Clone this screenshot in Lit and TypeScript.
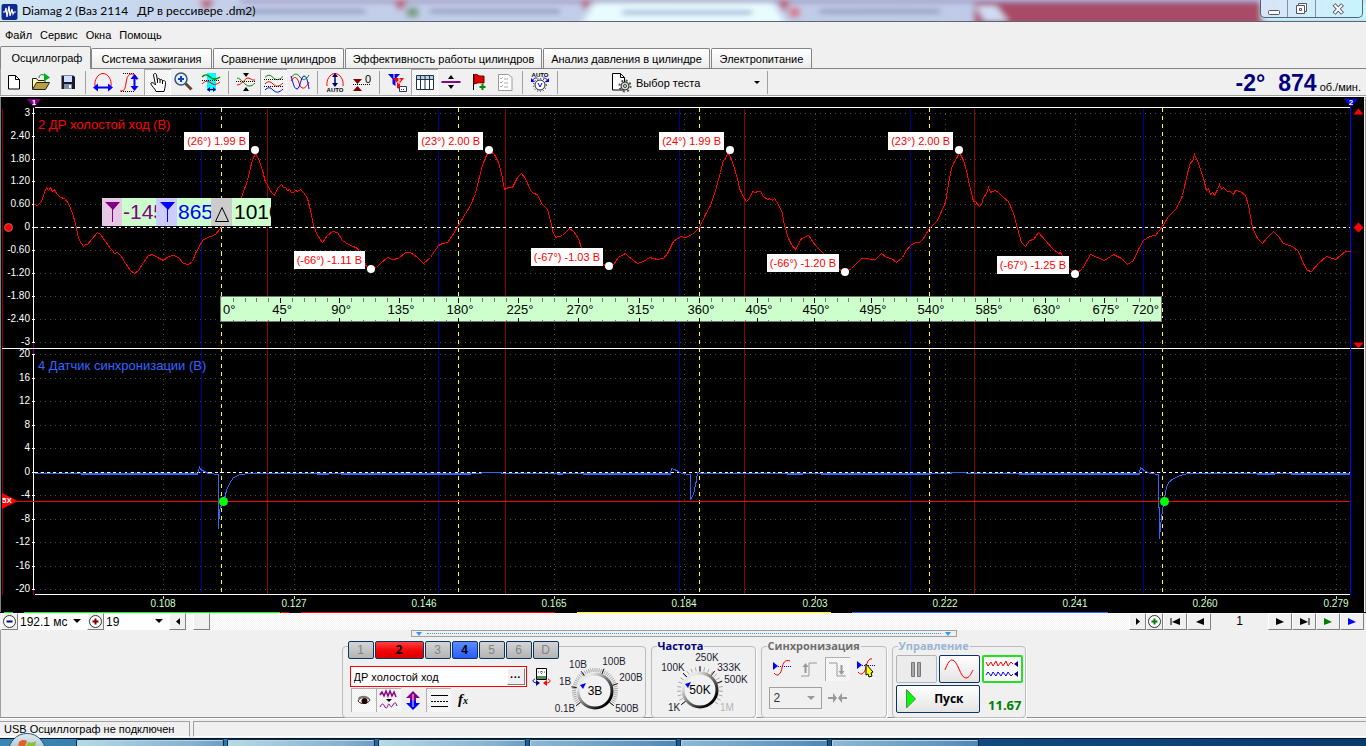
import { LitElement, html, svg, css, nothing, TemplateResult } from 'lit';
import { customElement } from 'lit/decorators.js';
import { classMap } from 'lit/directives/class-map.js';
import { styleMap } from 'lit/directives/style-map.js';

/* Plot space: the drawing origin and size of the oscilloscope canvas. */
const PX = 1, PY = 97, PW = 1363, PH = 515;
const at = (x: number, y: number) => ({
  left: `${((x - PX) / PW) * 100}%`,
  top: `${((y - PY) / PH) * 100}%`,
});
const rightAt = (x: number, y: number) => ({
  right: `${((PX + PW - x) / PW) * 100}%`,
  bottom: `${((PY + PH - y) / PH) * 100}%`,
});

const UPPER = [[113, '3'], [136, '2.40'], [159, '1.80'], [181, '1.20'], [204, '0.60'], [227, '0'], [250, '-0.60'], [273, '-1.20'], [296, '-1.80'], [319, '-2.40'], [342, '-3']] as [number, string][];
const LOWER = [[354, '20'], [378, '16'], [401, '12'], [425, '8'], [448, '4'], [472, '0'], [495, '-4'], [519, '-8'], [542, '-12'], [566, '-16'], [589, '-20']] as [number, string][];
const TIMES = [[163, '0.108'], [294, '0.127'], [424, '0.146'], [554, '0.165'], [684, '0.184'], [815, '0.203'], [945, '0.222'], [1075, '0.241'], [1205, '0.260'], [1336, '0.279']] as [number, string][];
const DEGREES = [[221, 0], [280, 45], [339, 90], [399, 135], [458, 180], [518, 225], [578, 270], [639, 315], [699, 360], [757, 405], [814, 450], [871, 495], [929, 540], [987, 585], [1045, 630], [1104, 675], [1162, 720]];
const PEAKS = [[255, 150, '(26°) 1.99 В'], [489, 150, '(23°) 2.00 В'], [730, 150, '(24°) 1.99 В'], [959, 150, '(23°) 2.00 В'], [371, 269, '(-66°) -1.11 В'], [609, 266, '(-67°) -1.03 В'], [845, 272, '(-66°) -1.20 В'], [1075, 274, '(-67°) -1.25 В']] as [number, number, string][];

const PRESSURE = '34,204 37,205 41,201 44,192 46,187 48,190 50,187 52,191 54,189 56,193 60,197 64,198 68,203 72,213 75,223 78,238 81,243 83,246 85,244 87,244 92,238 97,232 100,234 105,241 110,248 112,250 114,253 117,252 121,256 125,263 130,270 134,273 138,270 143,262 148,255 152,254 157,257 163,260 168,256 173,255 178,257 183,263 188,264 192,261 195,253 200,244 203,239 210,236 215,234 220,228 230,212 241,197 247,180 251,163 253,157 255,153 258,158 262,170 265,182 267,184 269,189 272,193 274,195 277,188 281,184 283,187 285,187 287,190 289,189 291,192 293,192 295,190 297,191 300,189 303,192 307,198 310,210 313,225 317,235 322,242 327,235 332,231 337,232 342,240 348,244 353,246 357,248 361,256 366,266 371,269 376,267 380,263 387,257 392,259 398,258 405,252 410,252 417,257 423,263 430,257 438,245 442,243 447,242 452,235 458,225 465,213 470,205 475,193 478,180 482,165 485,157 487,153 489,150 494,154 498,162 501,173 504,189 508,187 512,187 517,177 521,173 525,178 530,190 533,193 537,194 541,203 547,209 550,220 552,230 555,237 562,235 569,228 573,231 578,238 581,248 588,258 603,264 609,267 613,264 618,257 625,253 628,256 637,263 643,261 649,257 657,259 663,258 667,253 673,241 680,236 685,237 692,234 699,227 705,214 710,205 715,190 720,172 723,160 725,158 727,153 729,154 732,162 737,178 739,188 741,192 743,197 746,201 749,198 752,191 755,192 757,191 760,191 763,196 767,199 769,198 772,200 774,198 778,204 782,213 784,225 788,238 791,244 795,249 801,238 808,235 815,245 823,253 830,262 839,269 845,272 851,268 857,262 861,258 875,259 881,253 886,257 891,258 896,262 902,257 906,250 910,245 915,242 919,242 923,238 929,228 937,220 945,202 948,183 951,168 953,163 956,158 959,152 963,160 966,170 968,180 973,201 975,201 979,206 981,204 983,197 986,193 988,187 990,192 992,191 995,190 998,192 1003,197 1008,201 1013,213 1017,228 1021,242 1025,246 1029,240 1033,239 1038,232 1045,240 1052,248 1058,253 1060,252 1068,267 1075,274 1082,268 1090,254 1097,257 1104,260 1113,254 1121,258 1127,264 1133,260 1138,249 1143,240 1149,236 1155,235 1162,226 1168,216 1176,208 1182,195 1187,173 1190,162 1192,161 1194,154 1198,163 1203,178 1206,190 1208,188 1210,194 1212,192 1214,195 1217,189 1219,184 1221,189 1223,187 1227,191 1230,191 1233,194 1235,190 1240,191 1245,195 1248,205 1252,227 1257,238 1262,243 1267,237 1273,231 1278,236 1283,243 1292,246 1298,251 1303,263 1307,270 1311,271 1318,263 1326,256 1335,259 1345,251 1350,251';
const SYNC = '34,473 197,473 198,472 199,466 200,469 204,471 208,473 218,474 218,528 219,510 222,502 224,498 226,490 229,483 233,477 240,474 250,473 480,473 482,472 500,472 502,473 670,473 671,468 674,469 678,471 681,473 690,474 690,499 693,494 695,484 696,480 697,472 700,473 950,473 952,472 965,472 967,473 1139,473 1140,467 1145,471 1150,473 1158,474 1159,538 1160,525 1162,510 1164,497 1166,487 1168,482 1173,478 1180,475 1187,473 1350,473';

/* Toolbar pictures, each on a 27×26 field. */
const I: Record<string, TemplateResult> = {
  page: svg`<path d="M7.5 6.5h7l4 4v9.5h-11z" fill="#fff" stroke="#000"/><path d="M14.500 6.500v4h4" fill="none" stroke="#000"/>`,
  open: svg`<path d="M4.500 20V9.500h4l1.500 2h7V14" fill="#ffffb0" stroke="#222"/><path d="M4.500 20.500l4-7h13l-4 7z" fill="#b8a040" stroke="#222"/><path d="M11 9c0-3 2-4 5-3" fill="none" stroke="#083"/><path d="M16 4l6 4.500-6 4z" fill="#00b020"/>`,
  save: svg`<path d="M6.500 6.500h12l1.500 1.500v12h-13.500z" fill="#1a1a2a"/><path d="M9 7h8v6h-8z" fill="#cfe0ff"/><path d="M9 15h8v5h-8z" fill="#8090a8"/><path d="M14 16h2v3h-2z" fill="#fff"/>`,
  arc: svg`<path d="M5 17C4 11 8 4.500 13 4.500S22 11 21 17" fill="none" stroke="#f00"/><path d="M6 18.500h14" stroke="#00f" stroke-width="2"/><path d="M3 18.500l5-4v8zM23 18.500l-5-4v8z" fill="#00f"/>`,
  rise: svg`<path d="M6 4.500h12M4 22.500h14" stroke="#000" stroke-dasharray="1 1"/><path d="M3 22c5 0 5-2 6-8s2-9 6-9 4 3 5 6" fill="none" stroke="#f00"/><path d="M17.500 8v11" stroke="#00f" stroke-width="2"/><path d="M17.500 5l-4 5h8zM17.500 22l-4-5h8z" fill="#00f"/>`,
  hand: svg`<path d="M9.500 6c0-2 3-2 3 0l1 6 0-2c1-1 2.500-.5 2.500 1 1-1 2.500-.5 2.500 1 1.500-1 3 0 3 1.500 0 3-.5 5-1.500 9h-8c-1-3-4-5-5-7.500-.5-1.500 1.500-2 3-.5l1.500 1.500z" fill="#fff" stroke="#000"/><path d="M13.500 12v2M16 11v3M18.500 12v3" stroke="#000"/>`,
  loupe: svg`<circle cx="10" cy="10" r="6" fill="#dff0ff" stroke="#405070" stroke-width="1.500"/><path d="M7 10h6M10 7v6" stroke="#1040c0" stroke-width="2"/><path d="M14.500 14.500l6 6" stroke="#604830" stroke-width="3"/>`,
  slice: svg`<path d="M9 4h9v18h-9z" fill="#00ffff"/><path d="M4 8c3-3 5-3 8 0s6 3 10 0" fill="none" stroke="#080" stroke-width="1.500"/><path d="M4 11.500h18" stroke="#000" stroke-dasharray="1 1"/><path d="M4 15c4-4 6-3 9-1s5 2 9-1" fill="none" stroke="#f00"/><path d="M11 20.500h5" stroke="#008"/><path d="M9 20.500l3-2.500v5zM18 20.500l-3-2.500v5z" fill="#008"/>`,
  dna: svg`<path d="M4 9c4 0 8 8 12 8 3 0 4-1 6-3" fill="none" stroke="#080"/><path d="M4 16c5 0 8-7 11-7s4 3 7 2" fill="none" stroke="#f00"/><path d="M3 12.500h20" stroke="#000" stroke-dasharray="1 1"/><path d="M10 4h6l-3 4zM10 22h6l-3-4z" fill="#000"/>`,
  waves: svg`<path d="M5 8.500c3-3 5-3 8 0s6 3 10-1" fill="none" stroke="#080"/><path d="M5 15c3-3 5-3 8 0s6 3 10-1" fill="none" stroke="#f00"/><path d="M5 21c3-3 5-3 8 0s6 3 10-1" fill="none" stroke="#00f"/><path d="M4 10.500h19M4 17.500h19" stroke="#000" stroke-dasharray="1 1"/>`,
  mixed: svg`<path d="M4 9c3-5 6-5 9-1s6 3 9-2" fill="none" stroke="#080"/><path d="M4 12c3-5 6-5 8 2s6 7 10-1" fill="none" stroke="#f00"/><path d="M4 7c2 6 3 13 6 13s4-13 7-13 4 7 5 13" fill="none" stroke="#00f"/>`,
  auto: svg`<path d="M5 17C4 11 8 4.500 13 4.500S22 11 21 17" fill="none" stroke="#f00"/><path d="M13 7v8" stroke="#006" stroke-width="1.500"/><path d="M13 4l-3 4h6zM13 18l-3-4h6z" fill="#006"/><text x="13" y="23">AUTO</text>`,
  zero: svg`<path d="M4 10h9l-4.500 5zM4 22h9l-4.500-5z" fill="#800000"/><path d="M4 15.500h18" stroke="#000" stroke-dasharray="1 1"/><text x="19" y="14">0</text>`,
  filter: svg`<path d="M4 5h12l-4.500 5v7l-3-2v-5z" fill="#00f"/><path d="M9 9h11l-4 5v6l-3-1v-5z" fill="#f00"/><path d="M10 5v4M14 10h2v2h-2v2h2" fill="none" stroke="#fff"/><path d="M15.500 17.500h7v5h-7z" fill="#fff" stroke="#336"/><path d="M17 20.500h4" stroke="#336" stroke-dasharray="1 1"/>`,
  table: svg`<path d="M5.500 6.500h17v14h-17z" fill="#fff" stroke="#234"/><path d="M6 7h16v3h-16z" fill="#b8d0e8"/><path d="M5 10.500h18M9.500 7v14M14 7v14M18.500 7v14" stroke="#234"/>`,
  split: svg`<path d="M3.500 13h19" stroke="#808" stroke-width="2"/><path d="M13 6l3 4h-6zM13 20l3-4h-6z" fill="#000"/>`,
  flag: svg`<path d="M8.500 5v16" stroke="#000"/><path d="M9 6c3-2 4 1 6 1s3 0 4 0v7c-3 0-5-1-10 1z" fill="#e00000" stroke="#600"/><path d="M17.500 15v6M14.500 18h6" stroke="#080" stroke-width="2"/>`,
  list: svg`<path d="M6.500 5.500h10l3.500 3v13h-13.500z" fill="#fff" stroke="#999"/><path d="M8 9l1 1 2-2M8 13l1 1 2-2M8 17l1 1 2-2M12 10h4M12 14h4M12 18h4" fill="none" stroke="#aaa"/>`,
  volt: svg`<text x="13" y="8">AUTO</text><path d="M5 12c2-3 3-3 5-3M21 12c-2-3-3-3-5-3" fill="none" stroke="#00f"/><path d="M4 9v4h4zM22 9v4h-4z" fill="#00f"/><circle cx="13" cy="16" r="5" fill="#fff" stroke="#222"/><circle cx="13" cy="16" r="6.500" fill="none" stroke="#222" stroke-dasharray="1 2"/><path d="M11 14l2 4 2-4" fill="none" stroke="#00f"/>`,
};
const TOOLS: string[][] = [['page', 'open', 'save'], ['arc', 'rise', '*hand', 'loupe', 'slice'], ['dna', '*waves', 'mixed'], ['auto', 'zero'], ['filter', '*table', 'split', 'flag', 'list'], ['volt']];

@customElement('scope-plot')
export class ScopePlot extends LitElement {
  static styles = css`
    :host { display: block; position: relative; background: #000; overflow: hidden; color: #fff; font: 10px/12px "Liberation Sans", Arial, sans-serif; }
    .trace { position: absolute; inset: 0; width: 100%; height: 100%; display: block; }
    .trace * { vector-effect: non-scaling-stroke; }
    span { position: absolute; white-space: nowrap; }
    .y { width: 30px; text-align: right; margin-top: -6px; }
    .x { transform: translateX(-50%); color: #d4ffcc; }
    .deg { transform: translate(-50%, -50%); padding-left: 4px; color: #000; font-size: 13px; line-height: 16px; }
    .deg.first { transform: translateY(-50%); padding-left: 2px; }
    .deg.last { transform: translate(-100%, -50%); padding: 0 3px 0 0; }
    .peak { background: #fff; color: #f00; font-size: 11px; line-height: 18px; padding: 0 3px; margin-right: 6px; }
    .dot { width: 8px; height: 8px; margin: -4px; border-radius: 50%; background: #fff; }
    .title { font-size: 13px; line-height: 16px; color: #f00; }
    .title.sync { color: #36f; }
    .mark { width: 14px; margin-left: -7px; text-align: center; font: bold 8px/8px "Liberation Sans", Arial, sans-serif; background: #800080; clip-path: polygon(0 0, 100% 0, 50% 100%); }
    .mark.two { background: #00f; }
    .trig { width: 16px; height: 16px; background: #f00; clip-path: polygon(0 0, 100% 50%, 0 100%); font: bold 8px/16px "Liberation Sans", Arial, sans-serif; }
    .knot { width: 9px; height: 9px; margin: -4px; border-radius: 50%; background: #0f0; }
    .readout { position: absolute; display: flex; height: 28px; font-size: 21px; line-height: 28px; background: #cfc; }
    .readout svg { flex: none; display: block; }
    .readout b { font-weight: 400; overflow: hidden; width: 34px; padding-left: 1px; box-sizing: border-box; }
    .readout b.p { color: #800080; } .readout b.b { color: #00f; } .readout b.k { color: #000; width: 39px; padding-left: 2px; }
  `;
  private ticks() {
    const out: TemplateResult[] = [];
    DEGREES.forEach(([x], i) => {
      if (i) out.push(svg`<path d="M${x} 297v5M${x} 321v-4" stroke="#000"/>`);
      const next = DEGREES[i + 1];
      if (next) for (let k = 1; k < 5; k++) {
        const m = Math.round(x + ((next[0] - x) * k) / 5);
        out.push(svg`<path d="M${m} 297v4M${m} 321v-2" stroke="#777"/>`);
      }
    });
    return out;
  }
  render() {
    return html`
      <svg class="trace" viewBox="0.500 96.500 1363 515" preserveAspectRatio="none" fill="none" stroke-width="1">
        <g shape-rendering="crispEdges">
          <g stroke="#4c4c4c" stroke-dasharray="1 4">
            ${[...UPPER, ...LOWER].map(([y]) => svg`<path d="M39 ${y}H1350"/>`)}
            ${TIMES.map(([x]) => svg`<path d="M${x} 113V594"/>`)}
          </g>
          <g stroke="#8b0000">${[2, 267, 505, 744, 974].map((x) => svg`<path d="M${x} 108V594"/>`)}</g>
          <g stroke="#000090">${[201, 438, 679, 910, 1143].map((x) => svg`<path d="M${x} 108V594"/>`)}</g>
          <path d="M33 106V594" stroke="#800080"/>
          <path d="M34 107H1350M1 348H1364M34 594H1350M33 107V342M33 354V589" stroke="#fff"/>
          ${[...UPPER, ...LOWER].map(([y]) => svg`<path d="M31 ${y}h3" stroke="#fff"/>`)}
          ${TIMES.map(([x]) => svg`<path d="M${x} 595v3" stroke="#ccc"/>`)}
          <path d="M34 227H1350M34 472H1350" stroke="#fff" stroke-dasharray="3 3"/>
          <g stroke="#ffff00" stroke-dasharray="4 4">${[221, 458, 699, 929, 1162].map((x) => svg`<path d="M${x} 107V594"/>`)}</g>
          <path d="M80 474H197M316 474H328M340 474H470M556 474H562M582 474H670M786 474H802M820 474H930M1018 474H1139M1256 474H1274M1290 474H1350" stroke="#36f"/>
          <polyline points=${SYNC} stroke="#36f"/>
          <path d="M16 501H1350" stroke="#f00"/>
          <path d="M1350 106V594" stroke="#00f"/>
          <polyline points=${PRESSURE} stroke="#f00"/>
          <path d="M220 296H1161V321H220z" fill="#cfc" stroke="#777"/>
          ${this.ticks()}
        </g>
        <g fill="#f00"><path d="M1353 114h10l-5-6zM1353 342h10l-5 6zM1353 227l5-5 5 5-5 5z"/><circle cx="8" cy="227" r="4" stroke="#a66"/></g>
      </svg>
      ${[...UPPER, ...LOWER].map(([y, t]) => html`<span class="y" style=${styleMap(at(0, y))}>${t}</span>`)}
      ${TIMES.map(([x, t]) => html`<span class="x" style=${styleMap(at(x, 598))}>${t}</span>`)}
      ${DEGREES.map(([x, d]) => html`<span class=${classMap({ deg: true, first: d === 0, last: d === 720 })} style=${styleMap(at(x, 310))}>${d}°</span>`)}
      <span class="title" style=${styleMap(at(38, 117))}>2 ДР холостой ход (В)</span>
      <span class="title sync" style=${styleMap(at(38, 358))}>4 Датчик синхронизации (В)</span>
      ${PEAKS.map(([x, y, t]) => html`<span class="peak" style=${styleMap(rightAt(x, y))}>${t}</span><span class="dot" style=${styleMap(at(x, y))}></span>`)}
      ${[223, 1164].map((x) => html`<span class="knot" style=${styleMap(at(x, 501))}></span>`)}
      <span class="mark" style=${styleMap(at(34, 99))}>1</span>
      <span class="mark two" style=${styleMap(at(1351, 99))}>2</span>
      <span class="trig" style=${styleMap(at(2, 493))}>5X</span>
      <div class="readout" style=${styleMap(at(102, 198))}>
        <svg width="20" height="28"><path d="M0 0h20v28H0z" fill="#e6c8e6"/><path d="M3 4h15l-7 8z" fill="#800080"/><path d="M10.500 8v16" stroke="#800080"/></svg><b class="p">-145</b>
        <svg width="21" height="28"><path d="M0 0h21v28H0z" fill="#ccf"/><path d="M4 4h15l-7 8z" fill="#00f"/><path d="M11.500 8v16" stroke="#00f"/></svg><b class="b">865</b>
        <svg width="21" height="28"><path d="M0 0h21v28H0z" fill="#ccc"/><path d="M4.500 23.500h13l-6.500-14z" fill="none" stroke="#000"/></svg><b class="k">1010</b>
      </div>`;
  }
}

@customElement('range-knob')
export class RangeKnob extends LitElement {
  static properties = { kind: {}, value: {} };
  declare kind: string;
  declare value: string;
  static styles = css`
    :host { display: block; }
    svg { display: block; width: 94px; height: 64px; overflow: visible; }
    text { font: 10px "Liberation Sans", Arial, sans-serif; fill: #1c1c30; text-anchor: middle; }
    text.v { font-size: 12px; fill: #000; }
    text.off { fill: #b4b4b4; }
  `;
  render() {
    const volts = this.kind === 'volts';
    const cx = 47, cy = 37;
    const marks: [number, number, string][] = volts
      ? [[17, 58, '0.1В'], [17, 31, '1В'], [30, 14, '10В'], [66, 11, '100В'], [83, 27, '200В'], [79, 58, '500В']]
      : [[21, 58, '1K'], [20, 18, '100K'], [54, 8, '250K'], [76, 18, '333K'], [83, 30, '500K'], [74, 58, '1M']];
    const line = (deg: number, a: number, b: number, c: string, w = 1) => {
      const r = (deg * Math.PI) / 180;
      return svg`<path d="M${cx + a * Math.sin(r)} ${cy - a * Math.cos(r)}L${cx + b * Math.sin(r)} ${cy - b * Math.cos(r)}" stroke=${c} stroke-width=${w}/>`;
    };
    const dense = [];
    const n = volts ? 46 : 22;
    for (let i = 0; i <= n; i++) dense.push(line(-128 + (256 * i) / n, 19, 23, '#a8a8a8'));
    return html`<svg viewBox="0 0 94 64" fill="none" role="img" aria-label=${this.value}>
      <defs><linearGradient id="g" x1="0" y1="0" x2="1" y2="1"><stop offset=".2" stop-color="#e8e8e8"/><stop offset=".5" stop-color="#777"/><stop offset=".85" stop-color="#000"/></linearGradient></defs>
      ${dense}
      ${(volts ? [-128, -80, -35, 22, 72, 128] : [-128, -45, 0, 38, 68]).map((d) => line(d, 18, 24, '#111'))}
      <circle cx=${cx} cy=${cy} r="17" fill="#f2f2f2" stroke="url(#g)" stroke-width="3"/>
      <path d="M32 31l6-2-3 6z" fill="#00f"/>
      <text class="v" x=${cx} y=${cy + 4}>${this.value}</text>
      ${marks.map(([x, y, t]) => svg`<text class=${t === '1M' ? 'off' : ''} x=${x} y=${y}>${t}</text>`)}
    </svg>`;
  }
}

@customElement('app-root')
export class AppRoot extends LitElement {
  static styles = css`
    :host { display: flex; flex-direction: column; height: 100vh; overflow: hidden; background: #f0f0f0; color: #000; font: 11px/14px "Liberation Sans", Tahoma, Arial, sans-serif; }
    * { box-sizing: border-box; }
    button, select, input { font: inherit; color: inherit; margin: 0; padding: 0; border: 0; background: none; border-radius: 0; }
    svg { display: block; }

    .titlebar { position: relative; flex: none; display: flex; align-items: center; height: 22px; overflow: hidden; border-bottom: 1px solid #5c6672; background: #b9c6e4; }
    .glass { position: absolute; inset: 0; width: 100%; height: 100%; }
    .titlebar .logo { position: relative; margin-left: 1px; }
    h1 { position: relative; flex: 1; margin: 0 0 0 4px; font: 12px/20px Lato, "Open Sans", sans-serif; white-space: pre; }
    .caption { position: relative; align-self: flex-start; display: flex; width: 103px; height: 18px; margin-right: 3px; border: 1px solid #56627a; border-top: 0; border-radius: 0 0 5px 5px; background: linear-gradient(90deg, #d8e4f8, #c8f4fc); }
    .caption button { flex: 27; display: grid; place-items: center; border-left: 1px solid #8090a8; }
    .caption button:first-child { border: 0; }
    .caption .close { flex: 47; }

    .menu { flex: none; display: flex; gap: 8px; height: 24px; padding: 6px 5px 4px; }
    .menu a { color: #000; text-decoration: none; }

    .tabs { flex: none; display: grid; grid-template-columns: 91px 122px 132px 198px 168px 102px; align-items: end; height: 23px; border-bottom: 1px solid #848484; }
    .tabs button { height: 20px; margin-right: 1px; border: 1px solid #848484; border-bottom: 0; border-radius: 2px 2px 0 0; background: linear-gradient(#fff, #ececec); white-space: nowrap; }
    .tabs button.on { height: 23px; margin: 0 0 -1px; padding: 0 0 1px 3px; background: #f0f0f0; }

    .toolbar { flex: none; display: flex; height: 28px; border-bottom: 1px solid #fff; box-shadow: inset 0 -1px #a0a0a0, inset 1px 0 #a0a0a0; padding: 0 5px 1px 1px; }
    .toolbar .tool { width: 27px; height: 26px; }
    .toolbar .tool.on { background: repeating-conic-gradient(#fff 0 25%, #ececec 0 50%) 0 0 / 2px 2px; box-shadow: inset 1px 1px #a8a8a8, inset -1px -1px #fff; }
    .tool text { font: bold 6px "Liberation Sans", Arial, sans-serif; text-anchor: middle; }
    .tool .big text { font-size: 11px; font-weight: 400; }
    .sep { width: 8px; padding: 2px 4px 1px 3px; }
    .sep::before { content: ""; display: block; height: 100%; background: #a0a0a0; }
    .test { display: flex; align-items: center; width: 206px; margin: 2px 0 1px; padding: 0 7px 0 49px; border-right: 1px solid #a0a0a0; }
    .test span { flex: 1; margin-left: 4px; text-align: left; }
    .rpm { display: flex; align-items: baseline; margin-left: auto; white-space: nowrap; gap: 13px; color: #000080; font: bold 23px/28px "Liberation Sans", Arial, sans-serif; }
    .rpm small { margin-left: 3px; color: #000; font: 11px/14px "Liberation Sans", Arial, sans-serif; }

    .frame { flex: 1; display: flex; min-height: 200px; border-left: 1px solid #808080; border-right: 1px solid #a0a0a0; padding-right: 1px; }
    scope-plot { flex: 1; }

    .strip { flex: none; width: 100%; height: 1px; background: #000; }
    .nav { flex: none; display: flex; height: 17px; margin-left: 1px; padding-right: 2px; }
    .nav button { flex: none; width: 24px; border: 1px solid #fff; border-right-color: #808080; border-bottom-color: #808080; background: #f0f0f0; display: grid; place-items: center; }
    .nav button.sq { width: 17px; }
    .nav svg { flex: none; }
    .pick { position: relative; flex: none; display: flex; width: 69px; background: #fff; }
    .pick select { appearance: none; width: 100%; padding-left: 2px; font-size: 12px; line-height: 16px; }
    .pick svg { position: absolute; right: 6px; top: 6px; pointer-events: none; }
    .pick.wide { width: 65px; }
    input[type='range'] { appearance: none; flex: 1; min-width: 100px; height: 17px; background: repeating-conic-gradient(#fff 0 25%, #f0f0f0 0 50%) 0 0 / 2px 2px; }
    input[type='range']::-webkit-slider-thumb { appearance: none; width: 17px; height: 17px; background: #f0f0f0; border: 1px solid #fff; border-right-color: #808080; border-bottom-color: #808080; }
    output.page { width: 57px; text-align: center; font-size: 12px; line-height: 17px; }

    .deck { flex: none; height: 88px; display: flex; flex-direction: column; align-items: center; border-left: 1px solid #a0a0a0; border-bottom: 1px solid #909090; }
    .splitter { flex: none; width: 546px; height: 7px; border: 1px solid #a0a0a0; display: flex; align-items: center; justify-content: space-between; padding: 0 4px; }
    .splitter i { flex: 1; margin: 0 4px; border-top: 1px dotted #39f; }
    .groups { display: flex; gap: 5px; margin-top: 2px; }
    fieldset { position: relative; min-width: 0; margin: 0; padding: 0; height: 79px; border: 1px solid #bcbcbc; border-radius: 4px; box-shadow: 1px 1px #fff; }
    legend { margin-left: 5px; padding: 0 1px; font: bold 11px/14px "Open Sans", "Noto Sans", sans-serif; color: #000080; }
    .sync legend { color: #6d6d6d; } .run legend { color: #9ab4d4; }

    .chan { display: flex; width: 304px; height: 72px; margin-top: 7px; padding: 0; border: 1px solid #bcbcbc; border-radius: 4px; }
    .left { flex: none; width: 213px; margin-top: -6px; padding-left: 5px; }
    .nums { display: grid; grid-template-columns: 26px 49px repeat(5, 26px); gap: 1px; height: 18px; background: #f0f0f0; }
    .nums button { border: 1px solid #0b3560; border-radius: 2px; background: linear-gradient(#d4d4d4, #b4b4b4); color: #848484; font-size: 12px; line-height: 16px; }
    .nums .red { background: linear-gradient(#ff4040, #f00000 60%, #d80000); color: #000; font: bold 12px/16px "Open Sans", sans-serif; }
    .nums .blue { background: linear-gradient(#5c8cff, #2a5cff); color: #000; font-weight: bold; }
    .name { display: flex; align-items: center; gap: 5px; margin: 7px 0 1px 2px; }
    .field { display: flex; width: 177px; height: 21px; border: 1px solid #f00; background: #fff; padding: 1px; }
    .field input { flex: 1; min-width: 0; padding-left: 2px; }
    .field button { width: 18px; border: 1px solid #fff; border-right-color: #808080; border-bottom-color: #808080; background: #f0f0f0; font-weight: bold; line-height: 10px; }
    .opts { display: flex; margin-left: 3px; }
    .opts button { width: 25px; height: 24px; }
    .opts .on, .edges .on { background: repeating-conic-gradient(#fff 0 25%, #ececec 0 50%) 0 0 / 2px 2px; box-shadow: inset 1px 1px #b0b0b0; }
    .chan range-knob { margin: 7px 0 0 -8px; }

    .freq { width: 105px; } .freq range-knob { margin: 0 0 0 1px; }
    .sync { width: 126px; }
    .edges { display: flex; justify-content: space-between; padding: 4px 7px 0; }
    .edges button { width: 25px; height: 24px; }
    .level { display: flex; align-items: center; gap: 6px; margin: 6px 0 0 7px; }
    .level .combo { position: relative; width: 53px; height: 22px; border: 1px solid #a0a0a0; }
    .combo select { appearance: none; width: 100%; height: 20px; padding-left: 4px; font-size: 12px; color: #333; }
    .combo svg { position: absolute; right: 6px; top: 8px; pointer-events: none; }
    .run { width: 134px; }
    .pad { display: grid; grid-template-columns: 41px 41px 41px; gap: 2px; margin: 2px 3px 0; }
    .pad button { display: grid; place-items: center; height: 28px; border: 1px solid #0b3560; border-radius: 2px; background: linear-gradient(#fff, #e4e4e4); }
    .pad .off { border-color: #b4b4b4; background: #ececec; }
    .pad .green { border: 2px solid #22e022; background: #fff; }
    .pad .start { grid-column: span 2; display: flex; align-items: center; padding: 0 15px 0 9px; justify-content: space-between; font: bold 12px/16px "Open Sans", sans-serif; }
    .pad output { align-self: end; text-align: right; color: #008000; font: bold 13px/16px "Open Sans", sans-serif; padding-right: 1px; }

    .status { flex: none; display: flex; gap: 3px; height: 20px; padding: 2px 0 1px; border-top: 1px solid #fff; }
    .status div { border: 1px solid #a0a0a0; border-left: 0; border-bottom-color: #fff; padding: 0 4px; line-height: 15px; }
    .status div:first-child { width: 190px; white-space: nowrap; }
    .status div:last-child { flex: 1; border-left: 1px solid #a0a0a0; border-right: 0; }
    .taskbar { position: relative; flex: none; display: flex; gap: 3px; height: 8px; padding-left: 76px; background: linear-gradient(90deg, #3a86b4, #1d5f94 40%, #12477c 75%, #0b3a6c); border-top: 1px solid #04182c; }
    .taskbar a { width: 148px; border: 1px solid #0a2c48; border-bottom: 0; border-radius: 2px 2px 0 0; background: linear-gradient(90deg, #8fb8d2, #5f93ba 80%, #4f86b0); box-shadow: inset 1px 1px #b8d4e6; }
    .taskbar a.lit { background: linear-gradient(90deg, #b8dae2, #86b0cc 80%, #6d9cc0); }
    .taskbar .orb { position: absolute; left: 8px; top: -6px; }
  `;

  private tri(dir: 'l' | 'r', color = '#000', bar = false) {
    return html`<svg width="11" height="9" viewBox="0 0 11 9">${dir === 'r'
      ? svg`<path d="M1 1l8 4-8 3z" fill=${color}/>${bar ? svg`<path d="M10 1v7" stroke=${color}/>` : nothing}`
      : svg`<path d="M10 1L2 5l8 3z" fill=${color}/>${bar ? svg`<path d="M1 1v7" stroke=${color}/>` : nothing}`}</svg>`;
  }
  private round(color: string, plus: boolean) {
    return html`<svg width="15" height="15" viewBox="0 0 15 15"><circle cx="7.500" cy="7.500" r="6" fill="#fff" stroke="#333"/><path d=${plus ? 'M4.500 7.500h6M7.500 4.500v6' : 'M4.500 7.500h6'} stroke=${color} stroke-width="2"/></svg>`;
  }
  private down(color = '#000') {
    return html`<svg width="8" height="5" viewBox="0 0 8 5"><path d="M0 0h8L4 4z" fill=${color}/></svg>`;
  }
  private edge(dir: 'l' | 'r') {
    return html`<svg width="4" height="7" viewBox="0 0 4 7"><path d=${dir === 'r' ? 'M0 0l4 3.500L0 7z' : 'M4 0L0 3.500 4 7z'}/></svg>`;
  }

  render() {
    return html`
      <header class="titlebar">
        <svg class="glass" viewBox="0 0 1366 22" preserveAspectRatio="none" aria-hidden="true">
          <defs>
            <filter id="b" x="-10%" y="-50%" width="120%" height="200%"><feGaussianBlur stdDeviation="3"/></filter>
            <linearGradient id="tg" x1="0" y1="0" x2="1" y2="0"><stop offset="0" stop-color="#cfe6f6"/><stop offset=".15" stop-color="#c4d0ea"/><stop offset="1" stop-color="#bcc8e6"/></linearGradient>
          </defs>
          <path d="M0 0h1366v22H0z" fill="url(#tg)"/>
          <g filter="url(#b)">
            <path d="M240 0h1020v3H240z" fill="#9a8cb8"/>
            <path d="M975 3h290v24H975z" fill="#a84c68"/>
            <path d="M976 6h20l12 16H984z" fill="#d0dcf2"/>
            <path d="M595 3h178l14 24H580z" fill="#e8fcff"/>
            <path d="M200 0h14l-8 12zM394 0h14l-8 12zM582 0h10l-8 12zM778 0h12l-6 14z" fill="#b86078"/>
            <path d="M1262 0h110v22h-110z" fill="#c8f6fe"/>
            <path d="M235 12h130M430 12h130M820 12h120" stroke="#98a2c2" stroke-width="5"/>
            <path d="M622 13h130" stroke="#a4bcd8" stroke-width="5"/>
            <path d="M407 8h11v10h-11z" fill="#7a9a88"/><path d="M790 8h9v10h-9z" fill="#d87888"/>
          </g>
        </svg>
        <svg class="logo" width="17" height="18" viewBox="0 0 17 18"><rect width="16" height="16" y="2" x=".5" rx="2" fill="#0c2a90"/><path d="M2 10h2l1-4 1 9 2-11 1 10 2-7 1 5 1-2h2" fill="none" stroke="#fff" stroke-width="1.200"/></svg>
        <h1>Diamag 2 (Ваз 2114   ДР в рессивере .dm2)</h1>
        <div class="caption">
          <button aria-label="Свернуть"><svg width="13" height="12" viewBox="0 0 13 12"><rect x=".5" y="7.500" width="11" height="4" rx="1" fill="#fff" stroke="#556"/></svg></button>
          <button aria-label="Восстановить"><svg width="13" height="13" viewBox="0 0 13 13"><path d="M3.500 1.500h8v8h-8z" fill="#fff" stroke="#556"/><path d="M1.500 3.500h8v8h-8z" fill="#fff" stroke="#556"/><path d="M4.500 6.500h2v2h-2z" fill="none" stroke="#556"/></svg></button>
          <button class="close" aria-label="Закрыть"><svg width="13" height="12" viewBox="0 0 13 12"><path d="M2 1.500l8.500 9M10.500 1.500L2 10.500" stroke="#556" stroke-width="4"/><path d="M2.500 2l7.500 8M10 2l-7.500 8" stroke="#fff" stroke-width="2"/></svg></button>
        </div>
      </header>
      <nav class="menu">${['Файл', 'Сервис', 'Окна', 'Помощь'].map((t) => html`<a href="#">${t}</a>`)}</nav>
      <div class="tabs" role="tablist">
        ${['Осциллограф', 'Система зажигания', 'Сравнение цилиндров', 'Эффективность работы цилиндров', 'Анализ давления в цилиндре', 'Электропитание'].map((t, i) => html`<button role="tab" class=${classMap({ on: i === 0 })}>${t}</button>`)}
      </div>
      <div class="toolbar">
        ${TOOLS.map((g) => html`${g.map((n) => {
          const key = n.replace('*', '');
          return html`<button class=${classMap({ tool: true, on: n[0] === '*' })} aria-label=${key}><svg class=${key === 'zero' ? 'big' : ''} width="27" height="26" viewBox="0 0 27 26">${I[key]}</svg></button>`;
        })}<div class="sep"></div>`)}
        <button class="test">
          <svg width="21" height="20" viewBox="0 0 21 20"><path d="M1.500.5h8l4 4V17h-12z" fill="#fff" stroke="#000"/><path d="M9.500.5v4h4" fill="none" stroke="#000"/><circle cx="14" cy="13" r="4" fill="#cfe0cf" stroke="#333"/><circle cx="14" cy="13" r="5.500" fill="none" stroke="#555" stroke-width="2" stroke-dasharray="2 2.300"/><circle cx="14" cy="13" r="1.500" fill="#fff" stroke="#333"/></svg>
          <span>Выбор теста</span>
          <svg width="6" height="4" viewBox="0 0 6 4"><path d="M0 0h6L3 3z"/></svg>
        </button>
        <div class="rpm"><span>-2°</span><span>874<small>об./мин.</small></span></div>
      </div>
      <main class="frame"><scope-plot></scope-plot></main>
      <svg class="strip" viewBox="0 0 1366 1" preserveAspectRatio="none" aria-hidden="true">
        <path d="M4 0h9v1H4zM24 0h256v1H24z" fill="#0f0"/><path d="M281 0h8v1h-8zM301 0h254v1H301z" fill="#f00"/><path d="M577 0h254v1H577z" fill="#ff0"/><path d="M852 0h256v1H852z" fill="#36f"/>
      </svg>
      <div class="nav">
        <button class="sq" aria-label="Уменьшить">${this.round('#000080', false)}</button>
        <label class="pick"><select aria-label="Развёртка"><option>192.1 мс</option></select>${this.down()}</label>
        <button class="sq" aria-label="Увеличить">${this.round('#800000', true)}</button>
        <label class="pick wide"><select aria-label="Кадры"><option>19</option></select>${this.down()}</label>
        <button class="sq" aria-label="Влево">${this.edge('l')}</button>
        <input type="range" min="0" max="1000" value="8" aria-label="Прокрутка" />
        <button class="sq" aria-label="Вправо">${this.edge('r')}</button>
        <button class="sq" aria-label="Добавить">${this.round('#008000', true)}</button>
        <button aria-label="В начало">${this.tri('l', '#000', true)}</button>
        <button aria-label="Назад">${this.tri('l')}</button>
        <output class="page">1</output>
        <button aria-label="Вперёд">${this.tri('r')}</button>
        <button aria-label="В конец">${this.tri('r', '#000', true)}</button>
        <button aria-label="Пуск">${this.tri('r', '#008000')}</button>
        <button aria-label="Далее">${this.tri('r', '#00f')}</button>
      </div>
      <section class="deck">
        <div class="splitter"><svg width="7" height="4" viewBox="0 0 7 4"><path d="M0 0h6L3 4z" fill="#39f"/></svg><i></i><svg width="7" height="4" viewBox="0 0 7 4"><path d="M0 0h6L3 4z" fill="#39f"/></svg></div>
        <div class="groups">
          <div class="chan">
            <div class="left">
              <div class="nums">${['1', '2', '3', '4', '5', '6', 'D'].map((t) => html`<button class=${classMap({ red: t === '2', blue: t === '4' })}>${t}</button>`)}</div>
              <div class="name">
                <div class="field"><input aria-label="Имя канала" value="ДР холостой ход" /><button aria-label="Выбрать">···</button></div>
                <svg width="19" height="20" viewBox="0 0 19 20"><path d="M4.500 1.500h10v11h-10z" fill="#fff" stroke="#000"/><path d="M5 9h9v3H5z" fill="#5a8a5a"/><path d="M6 5h7M9.500 7V3" stroke="#555" stroke-dasharray="1 1"/><path d="M3 12c-3 1-3 4 3 4" fill="none" stroke="#008"/><path d="M4 13l4 3-4 3z" fill="#008"/><path d="M16 12c3 1 3 4-2 4" fill="none" stroke="#f00"/><path d="M15 13l-4 3 4 3z" fill="#f00"/></svg>
              </div>
              <div class="opts">
                <button class="on" aria-label="Показать"><svg width="25" height="24" viewBox="0 0 25 24"><path d="M7 13c2-5 10-5 12-1-2 4-9 5-12 1z" fill="#fff" stroke="#222"/><path d="M7 10c3-3 9-3 12 1l-1 1c-3-3-7-3-10 0z" fill="#777"/><circle cx="13.500" cy="13" r="3" fill="#200"/></svg></button>
                <button class="on" aria-label="Фильтр"><svg width="25" height="24" viewBox="0 0 25 24"><path d="M4 7l2-3 2 4 2-5 2 5 2-5 2 5 2-4 2 5" fill="none" stroke="#808" stroke-width="1.500"/><path d="M10 11h6l-3 3z"/><path d="M4 19c2-4 3-4 5 0s3-4 4-3 2 5 4 1 3-2 4 1" fill="none" stroke="#808"/></svg></button>
                <button aria-label="Сдвиг"><svg width="25" height="24" viewBox="0 0 25 24"><defs><linearGradient id="ud" x1="0" y1="0" x2="0" y2="1"><stop offset=".45" stop-color="#808"/><stop offset=".55" stop-color="#00f"/></linearGradient></defs><path d="M12 3l7 7h-4v5h4l-7 7-7-7h4v-5H5z" fill="url(#ud)"/><path d="M12 6v13" stroke="#f0f0f0"/></svg></button>
                <button class="on" aria-label="Уровни"><svg width="25" height="24" viewBox="0 0 25 24"><path d="M5 7.500h17M5 18.500h17" stroke="#000"/><path d="M5 13.500h17" stroke="#000" stroke-dasharray="2 1"/></svg></button>
                <button aria-label="Функция"><svg width="25" height="24" viewBox="0 0 25 24"><text x="7" y="16" font-family="Liberation Serif, serif" font-style="italic" font-weight="bold" font-size="15">f<tspan font-size="10">x</tspan></text></svg></button>
              </div>
            </div>
            <range-knob kind="volts" value="3В"></range-knob>
          </div>
          <fieldset class="freq"><legend>Частота</legend><range-knob kind="rate" value="50K"></range-knob></fieldset>
          <fieldset class="sync"><legend>Синхронизация</legend>
            <div class="edges">
              <button aria-label="Уровень"><svg width="25" height="24" viewBox="0 0 25 24"><path d="M4 5v8l5-4z" fill="#00f"/><path d="M9 9.500h13" stroke="#00f" stroke-dasharray="1 1"/><path d="M5 16c4 5 7 0 8-5s3-9 8-7" fill="none" stroke="#f00"/></svg></button>
              <button aria-label="Фронт"><svg width="25" height="24" viewBox="0 0 25 24"><path d="M4 19h8V6h8" fill="none" stroke="#999"/><path d="M8.500 9v7" stroke="#999" stroke-width="2"/><path d="M8.500 6l-3 4h6z" fill="#999"/></svg></button>
              <button class="on" aria-label="Спад"><svg width="25" height="24" viewBox="0 0 25 24"><path d="M4 6h8v13h9" fill="none" stroke="#999"/><path d="M16.500 8v6" stroke="#999" stroke-width="2"/><path d="M16.500 18l-3-4h6z" fill="#999"/></svg></button>
              <button aria-label="Захват"><svg width="25" height="24" viewBox="0 0 25 24"><path d="M4 4v8l5-4z" fill="#00f"/><path d="M9 8.500h13" stroke="#00f" stroke-dasharray="1 1"/><path d="M5 15c4 5 7 0 8-5s3-9 6-8" fill="none" stroke="#f00"/><path d="M13 7l7 8-2 1 1 3-3 1-1-3-2 1z" fill="#ff0" stroke="#000"/></svg></button>
            </div>
            <div class="level">
              <label class="combo"><select aria-label="Канал синхронизации"><option>2</option></select>${this.down('#999')}</label>
              <svg width="19" height="10" viewBox="0 0 19 10"><path d="M0 4h5V0l4 5-4 5V6H0zM19 4h-5V0l-4 5 4 5V6h5z" fill="#999"/></svg>
            </div>
          </fieldset>
          <fieldset class="run"><legend>Управление</legend>
            <div class="pad">
              <button class="off" aria-label="Пауза"><svg width="12" height="15" viewBox="0 0 12 15"><path d="M1.500.5h3v14h-3zM7.500.5h3v14h-3z" fill="#a8a8a8" stroke="#777"/></svg></button>
              <button aria-label="Синус"><svg width="30" height="20" viewBox="0 0 30 20"><path d="M1 11C4 3 6 1 8 1c6 0 8 18 14 18 3 0 5-4 7-8" fill="none" stroke="#f00"/></svg></button>
              <button class="green" aria-label="Две волны"><svg width="34" height="20" viewBox="0 0 34 20"><path d="M1 3l2 4 3-4 2 4 3-5 2 5 3-4 2 4 3-5 2 5 3-4 2 2" fill="none" stroke="#f00"/><path d="M1 16l2-3 3 4 2-4 3 4 2-4 3 4 2-4 3 4 2-4 3 4 2-2" fill="none" stroke="#00f"/><path d="M33 2v6l-4-3zM33 12v6l-4-3z" fill="#008"/></svg></button>
              <button class="start"><svg width="10" height="20" viewBox="0 0 10 20"><path d="M.5.5L9.500 10 .5 19z" fill="#0f0" stroke="#585"/></svg><span>Пуск</span></button>
              <output>11.67</output>
            </div>
          </fieldset>
        </div>
      </section>
      <footer class="status"><div>USB Осциллограф не подключен</div><div></div></footer>
      <div class="taskbar">
        <svg class="orb" width="38" height="14" viewBox="0 0 38 14"><defs><linearGradient id="ob" x1="0" y1="0" x2="0" y2="1"><stop offset="0" stop-color="#e4ecf2"/><stop offset="1" stop-color="#5c86a8"/></linearGradient></defs><circle cx="19" cy="19" r="18.500" fill="url(#ob)" stroke="#2a5a80"/><path d="M11 9c3-3 6-2 8-1l-2 6h-7z" fill="#e0602a"/><path d="M20 9c3 1 5 1 8-1l-1 6h-9z" fill="#8cc030"/></svg>
        <a href="#" class="lit" aria-label="1"></a><a href="#" class="lit" aria-label="2"></a><a href="#" class="lit" aria-label="3"></a><a href="#" aria-label="4"></a><a href="#" aria-label="5"></a><a href="#" aria-label="6"></a>
      </div>`;
  }
}
